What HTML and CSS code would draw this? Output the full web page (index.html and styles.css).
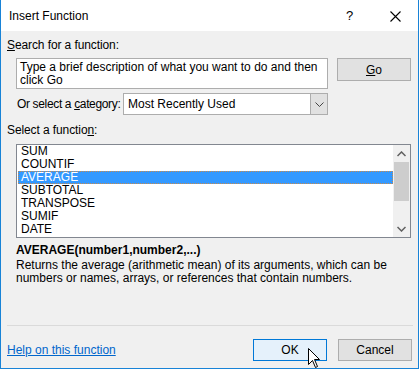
FILE: index.html
```html
<!DOCTYPE html>
<html>
<head>
	<meta charset="utf-8">
	<title>Insert Function</title>
	<link rel="stylesheet" href="styles.css">
</head>
<body>

<div class='dialog'>
	<div class='titlebar'>
		<span class='title'>Insert Function</span>
		<span class='help'>?</span>
		<span class='close'>
			<svg width="11" height="11" viewBox="0 0 11 11"><path d="M0.5 0.5 L10.5 10.5 M10.5 0.5 L0.5 10.5" stroke="#000" stroke-width="1.1" fill="none"/></svg>
		</span>
	</div>

	<div class='content'>
		<div class='label'><u>S</u>earch for a function:</div>

		<div class='search-row'>
			<div class='search-box'>Type a brief description of what you want to do and then click Go</div>
			<button class='btn'><u>G</u>o</button>
		</div>

		<div class='category-row'>
			<span class='category-label'>Or select a <u>c</u>ategory:</span>
			<div class='select'>
				<span class='select-value'>Most Recently Used</span>
				<span class='select-arrow'>
					<svg width="9" height="5" viewBox="0 0 9 5"><path d="M0.5 0.5 L4.5 4.5 L8.5 0.5" stroke="#444" fill="none"/></svg>
				</span>
			</div>
		</div>

		<div class='label'>Select a functio<u>n</u>:</div>

		<div class='listbox'>
			<ul class='items'>
				<li>SUM</li>
				<li>COUNTIF</li>
				<li class='selected'>AVERAGE</li>
				<li>SUBTOTAL</li>
				<li>TRANSPOSE</li>
				<li>SUMIF</li>
				<li>DATE</li>
			</ul>
			<div class='scrollbar'>
				<span class='arrow'>
					<svg width="9" height="6" viewBox="0 0 9 6"><path d="M0.5 5 L4.5 1 L8.5 5" stroke="#606060" stroke-width="1.5" fill="none"/></svg>
				</span>
				<div class='thumb'></div>
				<span class='arrow down'>
					<svg width="9" height="6" viewBox="0 0 9 6"><path d="M0.5 1 L4.5 5 L8.5 1" stroke="#606060" stroke-width="1.5" fill="none"/></svg>
				</span>
			</div>
		</div>

		<div class='signature'>AVERAGE(number1,number2,...)</div>
		<p class='description'>Returns the average (arithmetic mean) of its arguments, which can be numbers or names, arrays, or references that contain numbers.</p>

		<div class='separator'></div>

		<div class='footer'>
			<a class='link' href='#'>Help on this function</a>
			<div class='buttons'>
				<button class='btn default'>OK</button>
				<button class='btn'>Cancel</button>
			</div>
			<svg class='cursor' width="13" height="20" viewBox="0 0 13 20"><path d="M0.5 0.5 L0.5 16.5 L4.5 12.5 L7.5 19.5 L9.5 18.5 L6.5 11.5 L11.5 11.5 Z" fill="#fff" stroke="#000"/></svg>
		</div>
	</div>
</div>

</body>
</html>
```

FILE: styles.css
```css
* {
	box-sizing: border-box;
}

body {
	margin: 0;
	padding: 0;
	background: #fff;
	font-family: 'Liberation Sans', sans-serif;
	font-size: 12px;
	color: #000;
}

.dialog {
	width: 419px;
	height: 369px;
	border: 1px solid #1883d7;
	border-top: none;
	display: flex;
	flex-direction: column;
}

.titlebar {
	height: 31px;
	background: #fff;
	display: flex;
	align-items: center;
}

.title {
	flex: 1;
	padding-left: 8px;
	font-size: 12px;
}

.help {
	width: 10px;
	font-size: 13px;
	margin-right: 34px;
}

.close {
	display: flex;
	margin-right: 17px;
	margin-top: 1px;
}

.content {
	flex: 1;
	background: #f0f0f0;
	padding: 7px 6px 0 6px;
	position: relative;
}

.label {
	line-height: 15px;
	height: 15px;
	letter-spacing: -0.1px;
}

.search-row {
	display: flex;
	align-items: flex-start;
	margin-top: 5px;
	padding-left: 9px;
}

.search-box {
	width: 312px;
	height: 31px;
	background: #fff;
	border: 1px solid #adadad;
	padding: 2px 3px;
	line-height: 13px;
	color: #000;
}

.btn {
	font-family: inherit;
	font-size: 12px;
	width: 74px;
	height: 23px;
	background: #e1e1e1;
	border: 1px solid #adadad;
	padding: 0;
	margin-left: 9px;
	color: #000;
}

.category-row {
	display: flex;
	justify-content: space-between;
	align-items: center;
	width: 321px;
	margin-top: 4px;
	padding-left: 10px;
	height: 22px;
}

.category-label {
	letter-spacing: -0.35px;
}

.select {
	display: flex;
	width: 205px;
	height: 22px;
	background: #fff;
	border: 1px solid #adadad;
}

.select-value {
	flex: 1;
	padding-left: 4px;
	line-height: 20px;
}

.select-arrow {
	width: 17px;
	background: #e1e1e1;
	border-left: 1px solid #adadad;
	display: flex;
	align-items: center;
	justify-content: center;
}

.category-row + .label {
	margin-top: 8px;
}

.listbox {
	display: flex;
	margin: 6px 0 0 9px;
	width: 395px;
	height: 94px;
	background: #fff;
	border: 1px solid #828790;
}

.items {
	list-style: none;
	margin: 0;
	padding: 0 0 0 1px;
	flex: 1;
}

.items li {
	height: 13px;
	line-height: 13px;
	padding-left: 3px;
}

.items li.selected {
	background: #3399ff;
	color: #fff;
	outline: 1px dotted #c98a4a;
	outline-offset: -1px;
}

.scrollbar {
	width: 17px;
	background: #f0f0f0;
	display: flex;
	flex-direction: column;
	align-items: center;
}

.arrow {
	height: 17px;
	display: flex;
	align-items: center;
	justify-content: center;
}

.thumb {
	width: 15px;
	height: 39px;
	background: #cdcdcd;
	flex: none;
}

.arrow.down {
	margin-top: auto;
}

.signature {
	font-weight: bold;
	margin: 5px 0 0 9px;
	line-height: 14px;
}

.description {
	margin: 2px 0 0 9px;
	line-height: 13px;
	width: 380px;
}

.separator {
	margin-top: 40px;
	height: 1px;
	background: #dadada;
	margin-right: -1px;
}

.footer {
	display: flex;
	align-items: center;
	margin-top: 13px;
	position: relative;
}

.link {
	flex: 1;
	color: #0066cc;
	text-decoration: underline;
}

.buttons {
	display: flex;
}

.buttons .btn {
	height: 22px;
	margin-left: 11px;
}

.btn.default {
	background: #e5f1fb;
	border-color: #0078d7;
}

.cursor {
	position: absolute;
	left: 301px;
	top: 9px;
}
```
